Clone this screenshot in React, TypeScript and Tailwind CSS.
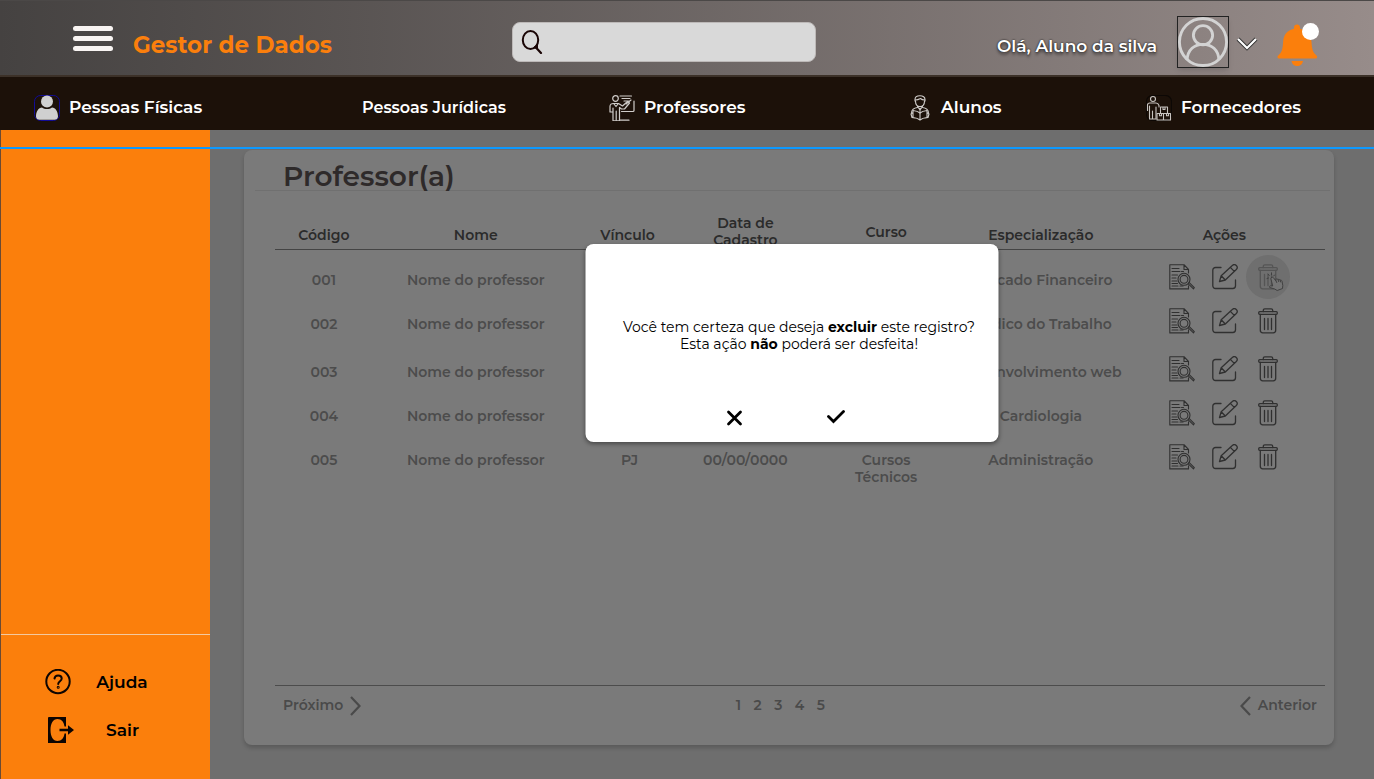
import type { ReactNode } from "react";

type Row = {
  code: string;
  name: string;
  bond?: string;
  date?: string;
  course?: string;
  specialty: string;
  height: string;
};

const rows: Row[] = [
  { code: "001", name: "Nome do professor", specialty: "Mercado Financeiro", height: "h-11" },
  { code: "002", name: "Nome do professor", specialty: "Médico do Trabalho", height: "h-12" },
  { code: "003", name: "Nome do professor", specialty: "Desenvolvimento web", height: "h-11" },
  { code: "004", name: "Nome do professor", specialty: "Cardiologia", height: "h-11" },
  { code: "005", name: "Nome do professor", bond: "PJ", date: "00/00/0000", course: "Cursos Técnicos", specialty: "Administração", height: "h-11" },
];

function PersonIcon() {
  return (
    <svg viewBox="0 0 26 26" className="size-[26px] shrink-0" aria-hidden="true">
      <rect x="0.5" y="0.5" width="25" height="25" rx="6" fill="none" stroke="#120c96" />
      <circle cx="13" cy="6.500" r="6" fill="#d0d0d0" />
      <path d="M2 21.500c0-5 2.500-9 6-9 1.500 1 3 1.600 5 1.600s3.500-.6 5-1.600c3.500 0 6 4 6 9 0 2-1.500 3.300-3.500 3.300h-15C3.500 24.800 2 23.500 2 21.500z" fill="#d0d0d0" />
    </svg>
  );
}

function TeacherIcon() {
  return (
    <svg viewBox="0 0 26 26" className="size-[26px] shrink-0" fill="none" stroke="#d0cdca" strokeWidth="1.200" strokeLinecap="round" strokeLinejoin="round" aria-hidden="true">
      <circle cx="6.500" cy="3.500" r="2.800" />
      <path d="M11 1h11.500M25 6v9.500a1 1 0 0 1-1 1H12.500M13 3.500h8M15 6h4.500" />
      <path d="M1 17v-5.500C1 9.500 2.500 8.500 4.500 8.500h5l4 2.500 5-4.500 2 1.500-5 6h-3l-2-1.500v13.300H4V13M1 17h2.500M7.200 16v9M10.500 25.200H20" />
      <path d="m17 9 5-4M5 9l2 2.500L9 9" />
    </svg>
  );
}

function StudentIcon() {
  return (
    <svg viewBox="0 0 22 26" className="h-[26px] w-[22px] shrink-0" fill="none" stroke="#d0cdca" strokeWidth="1.100" strokeLinecap="round" strokeLinejoin="round" aria-hidden="true">
      <path d="M5 6V4.500C5 2 7 .8 10 .8s5 1.200 5 3.700V6M5.500 5c3 0 4-1 5-1.500 1 1 2 1.500 4 1.500" />
      <path d="M5.500 6c0 3.500 1.800 5.500 4.500 5.500s4.500-2 4.500-5.500M7.500 11.500 10 15l2.500-3.500M10 13v5" />
      <path d="M7.500 12.500C4 13 1.800 14.500 1.500 17.500M12.500 12.500c3.500.5 5.700 2 6 5" />
      <path d="M3 15.500c3 .3 5.500 1.200 7 2.500 1.500-1.300 4-2.200 7-2.500v7c-3 .3-5.500 1.200-7 2.500-1.500-1.300-4-2.200-7-2.500zM10 18v7M3 17.500l-2 1.500 1 3.500 3 .5M17 17.500l2 1.500-1 3.500-3 .5" />
    </svg>
  );
}

function SupplierIcon() {
  return (
    <svg viewBox="0 0 26 26" className="size-[26px] shrink-0" fill="none" stroke="#c8c4c0" strokeWidth="1.100" strokeLinecap="round" strokeLinejoin="round" aria-hidden="true">
      <rect x="0.500" y="0.500" width="25" height="25" rx="6" stroke="#0d0805" />
      <circle cx="7" cy="4" r="2.500" />
      <path d="M3.500 23.500V11M1.500 15.500V10C1.500 8.500 2.500 8 4 8h6c1.500 0 2.500 1 3 2.500V12M6.500 16v8M3.500 24h6.500V12" />
      <path d="M14.500 12h7v6.500h-7zM17 12v2.500h2V12M11 18.500h6.500V25H11zM17.500 18.500H24.500V25h-7zM13.500 18.500v2.200h2v-2.200M20.500 18.500v2.200h2v-2.200" />
    </svg>
  );
}

function DetailsIcon() {
  return (
    <svg viewBox="0 0 26 26" className="size-[26px]" fill="none" stroke="currentColor" strokeWidth="1.100" strokeLinecap="round" strokeLinejoin="round" aria-hidden="true">
      <path d="M19.500 9V5.500L15 .7H.8v24.200h18.700v-3M15 .7v4.800h4.500" />
      <path d="M3 4.500h7M3 7.500h8M12.500 7.500h2M3 11h5.500M3 14h4M3 17h5M3 19.500h5.500M3 22h6M11 22h3" />
      <circle cx="15" cy="15.300" r="6" />
      <circle cx="15" cy="15.300" r="3.900" />
      <path d="m19.300 19.800 5.200 5M20.300 18.700l5 4.900-.8 1.200" />
    </svg>
  );
}

function EditIcon() {
  return (
    <svg viewBox="0 0 26 26" className="size-[26px]" fill="none" stroke="currentColor" strokeWidth="1.300" strokeLinecap="round" strokeLinejoin="round" aria-hidden="true">
      <path d="M9 3.500H3.500a2.700 2.700 0 0 0-2.700 2.700v15.600a2.700 2.700 0 0 0 2.700 2.700h17.300a2.700 2.700 0 0 0 2.700-2.700V16" />
      <path d="m7.500 17.500 1.700-5.800L20.300 1.500a2.800 2.800 0 0 1 4 4L13.300 16zM9.200 11.700l4.100 4.300M18.300 3.400l4 4" />
    </svg>
  );
}

function TrashIcon() {
  return (
    <svg viewBox="0 0 20 26" className="h-[26px] w-5" fill="none" stroke="currentColor" strokeWidth="1.300" strokeLinecap="round" strokeLinejoin="round" aria-hidden="true">
      <rect x="0.700" y="3.700" width="18.600" height="2.600" rx="1" />
      <path d="M5.300 3.500V2.300c0-1 .6-1.500 1.500-1.500h6.400c.9 0 1.500.5 1.500 1.500v1.200M2.300 6.500v15.800c0 1.500 1 2.500 2.500 2.500h10.400c1.500 0 2.500-1 2.500-2.500V6.500M6.500 10.500v11M10 10.500v11M13.500 10.500v11" />
    </svg>
  );
}

function HandCursor() {
  return (
    <svg viewBox="0 0 18 20" className="absolute left-5 top-[17px] h-5 w-[18px]" fill="#757575" stroke="#414141" strokeLinejoin="round" strokeLinecap="round" aria-hidden="true">
      <path d="M5.500 5.500c.8-.6 1.600-.3 2.100.4l2.100 2.800.3-1.600c1-.5 1.700-.2 2 .5.900-.5 1.700-.2 2.100.6 1-.3 1.700.2 1.900 1l.8 4.300-.3 3-5.300 2-2.500-1.500-5-1.500c-.6-1 .2-1.700 1-1.700l2 .2L5 7.200c-.3-.7 0-1.400.5-1.700z" />
      <path d="M1 6.500 2.500 6M2 2l1.200 1.500M5.500.8v1.800M8.500 3 7.700 4M10 8.700l.7 1.800M12 7.600l.7 2M14.100 8.200l.5 1.800" fill="none" />
    </svg>
  );
}

function NavItem({ icon, children }: { icon?: ReactNode; children: ReactNode }) {
  return (
    <li>
      <a href="#" className="flex items-center gap-[9px] whitespace-nowrap">
        {icon}
        {children}
      </a>
    </li>
  );
}

function Header() {
  return (
    <header className="grid h-[77px] grid-cols-[512fr_304fr_558fr] border-b-2 border-t border-b-[#3c3128] border-t-[#4b4847] bg-linear-to-r from-[#454241] to-[#978c8a]">
      <div className="flex items-start pl-[73px]">
        <button type="button" aria-label="Abrir menu" className="mt-[25px] flex w-10 flex-col gap-[5px]">
          <span className="h-[5px] w-full rounded-sm bg-[#f8f4f2]" />
          <span className="h-[5px] w-full rounded-sm bg-[#f8f4f2]" />
          <span className="h-[5px] w-full rounded-sm bg-[#f8f4f2]" />
        </button>
        <a href="#" className="ml-5 mt-7 whitespace-nowrap text-[23px] font-bold leading-8 text-[#fb7f0c]">
          Gestor de Dados
        </a>
      </div>
      <label className="mt-[21px] flex h-10 items-center rounded-lg border border-[#bdb9b8] bg-[#d9d9d9] pl-2">
        <svg viewBox="0 0 22 24" className="h-6 w-[22px] shrink-0" fill="none" stroke="#1a0505" strokeLinecap="round" aria-hidden="true">
          <ellipse cx="9.500" cy="10" rx="7.700" ry="9" strokeWidth="2" />
          <path d="m14.500 17 5.500 6" strokeWidth="2.200" />
          <path d="M16.500 14.500v4l-3.500-.7z" fill="#1a0505" strokeWidth="1" />
        </svg>
        <input type="search" aria-label="Pesquisar" className="h-full min-w-0 flex-1 bg-transparent px-2 outline-none" />
      </label>
      <div className="flex items-start justify-end pr-[55px]">
        <span className="mt-[33px] whitespace-nowrap text-[17px] font-semibold leading-6 text-white [text-shadow:0_0_2px_#000,0_3px_3px_#0006]">
          Olá, Aluno da silva
        </span>
        <button type="button" aria-label="Perfil" className="ml-5 mt-[15px] flex items-center gap-2">
          <svg viewBox="0 0 52 52" className="size-[52px] border border-[#222] shadow-md" fill="none" stroke="#d3d3d3" strokeWidth="3" aria-hidden="true">
            <circle cx="26" cy="26" r="24.500" />
            <circle cx="26" cy="19" r="10" />
            <path d="M9.500 44.500C10 34 17 28.500 26 28.500S42 34 42.500 44.500" />
          </svg>
          <svg viewBox="0 0 20 14" className="mt-1 h-[14px] w-5 overflow-visible" fill="none" aria-hidden="true">
            <path d="m1 2 9 9 9-9" stroke="#333" strokeWidth="4" />
            <path d="m1 2 9 9 9-9" stroke="#fff" strokeWidth="2.200" />
          </svg>
        </button>
        <button type="button" aria-label="Notificações" className="ml-5 mt-[22px]">
          <svg viewBox="0 0 42 44" className="h-11 w-[42px]" aria-hidden="true">
            <path d="M20 1.500c1.800 0 3 1.200 3 3v1.200c7 1.300 11 6.300 11.500 13.300.4 7.500 1.500 10.500 5 13.500 1.200 1 .7 3-1 3H2.200c-1.800 0-2.300-2-1-3 3.500-3 4.500-6 4.900-13.500C6.500 12 10 7 17 5.700V4.500c0-1.800 1.200-3 3-3zM14.500 38h11.500c-.4 3-3 5-5.800 5s-5.300-2-5.700-5z" fill="#fb7f0c" />
            <circle cx="33.500" cy="8.500" r="8.500" fill="#fff" />
          </svg>
        </button>
      </div>
    </header>
  );
}

function TeachersTable() {
  return (
    <table className="w-full table-fixed border-collapse text-center text-sm font-semibold leading-[17px] text-[#4c4c4c]">
      <colgroup>
        <col className="w-[9.320%]" />
        <col className="w-[19.600%]" />
        <col className="w-[9.320%]" />
        <col className="w-[13.120%]" />
        <col className="w-[13.690%]" />
        <col className="w-[15.780%]" />
        <col />
      </colgroup>
      <thead className="text-[#2b2b2b]">
        <tr className="h-[37px] border-b border-[#444]">
          <th className="pt-2.5 font-semibold">Código</th>
          <th className="pt-2.5 font-semibold">Nome</th>
          <th className="pt-2.5 font-semibold">Vínculo</th>
          <th className="px-8 pt-1 font-semibold">Data de Cadastro</th>
          <th className="pt-1 font-semibold">Curso</th>
          <th className="pt-2.5 font-semibold">Especialização</th>
          <th className="pt-2.5 font-semibold">Ações</th>
        </tr>
      </thead>
      <tbody className="before:block before:h-[5px]">
        {rows.map((row, i) => (
          <tr key={row.code} className={`${row.height} align-top`}>
            <td className="pt-[17px]">{row.code}</td>
            <td className="whitespace-nowrap pt-[17px]">{row.name}</td>
            <td className="pl-1 pt-[17px]">{row.bond}</td>
            <td className="pt-[17px]">{row.date}</td>
            <td className="px-8 pt-[17px]">{row.course}</td>
            <td className="whitespace-nowrap pt-[17px]">{row.specialty}</td>
            <td className="pl-0.5">
              <div className="flex justify-center text-[#303030]">
                <button type="button" aria-label={`Ver ${row.code}`} className="grid h-11 w-[43px] place-items-center">
                  <DetailsIcon />
                </button>
                <button type="button" aria-label={`Editar ${row.code}`} className="grid h-11 w-[43px] place-items-center">
                  <EditIcon />
                </button>
                {i === 0 ? (
                  <button type="button" aria-label={`Excluir ${row.code}`} className="relative grid size-11 place-items-center rounded-full bg-[#6f6f6f] text-[#555]">
                    <TrashIcon />
                    <HandCursor />
                  </button>
                ) : (
                  <button type="button" aria-label={`Excluir ${row.code}`} className="grid size-11 place-items-center">
                    <TrashIcon />
                  </button>
                )}
              </div>
            </td>
          </tr>
        ))}
      </tbody>
    </table>
  );
}

function Pagination() {
  return (
    <nav aria-label="Paginação" className="grid h-10 grid-cols-[461fr_89px_501fr] items-center border-t border-[#4c4c4c] px-2 pb-0.5 text-sm font-semibold text-[#4a4a4a]">
      <button type="button" className="flex items-center gap-[7px]">
        Próximo
        <svg viewBox="0 0 11 20" className="mt-[3px] h-5 w-[11px]" fill="none" stroke="currentColor" strokeWidth="2.200" aria-hidden="true">
          <path d="m1 1 8.500 9L1 19" />
        </svg>
      </button>
      <ol className="flex justify-between">
        {[1, 2, 3, 4, 5].map((n) => (
          <li key={n}>
            <a href="#">{n}</a>
          </li>
        ))}
      </ol>
      <button type="button" className="flex items-center justify-end gap-[7px]">
        <svg viewBox="0 0 11 20" className="mt-[3px] h-5 w-[11px]" fill="none" stroke="currentColor" strokeWidth="2.200" aria-hidden="true">
          <path d="M10 1 1.500 10 10 19" />
        </svg>
        Anterior
      </button>
    </nav>
  );
}

function ConfirmDialog() {
  return (
    <div role="alertdialog" aria-label="Confirmar exclusão" className="absolute left-1/2 top-[114px] flex h-[198px] w-[413px] -translate-x-1/2 flex-col justify-between rounded-lg bg-white pb-3 pt-[75px] shadow-[0_2px_4px_#0006]">
      <p className="whitespace-nowrap pl-[14px] text-center text-sm font-normal leading-[17px] text-black">
        Você tem certeza que deseja <strong className="font-bold">excluir</strong> este registro?
        <br />
        Esta ação <strong className="font-bold">não</strong> poderá ser desfeita!
      </p>
      <div className="flex justify-center gap-[78px] pr-[14px]">
        <button type="button" aria-label="Cancelar" className="grid size-6 place-items-center">
          <svg viewBox="0 0 16 16" className="size-4" fill="none" stroke="#000" strokeWidth="2.800" strokeLinecap="round" aria-hidden="true">
            <path d="m2 2 12 12M14 2 2 14" />
          </svg>
        </button>
        <button type="button" aria-label="Confirmar" className="grid size-6 place-items-center">
          <svg viewBox="0 0 20 16" className="h-4 w-5" fill="none" stroke="#000" strokeWidth="2.800" strokeLinecap="round" aria-hidden="true">
            <path d="m2 6.500 5 5L17 1.500" />
          </svg>
        </button>
      </div>
    </div>
  );
}

export default function App() {
  return (
    <div className="relative flex min-h-screen flex-col bg-[#6e6e6e] font-['Montserrat','Inter',sans-serif]">
      <Header />
      <nav aria-label="Principal" className="bg-[#1c1109]">
        <ul className="grid h-[53px] grid-cols-[328fr_247fr_301fr_236fr_228fr] items-center pl-[34px] pt-2 text-[17px] font-semibold text-white">
          <NavItem icon={<PersonIcon />}>Pessoas Físicas</NavItem>
          <li>
            <a href="#" className="whitespace-nowrap text-base">Pessoas Jurídicas</a>
          </li>
          <NavItem icon={<TeacherIcon />}>Professores</NavItem>
          <NavItem icon={<StudentIcon />}>Alunos</NavItem>
          <NavItem icon={<SupplierIcon />}>Fornecedores</NavItem>
        </ul>
      </nav>
      <div className="flex flex-1">
        <aside className="flex w-[210px] shrink-0 flex-col justify-end border-l border-[#6b4a33] bg-[#fb7f0c]">
          <ul className="flex h-[145px] flex-col gap-[22px] border-t border-[#f3c9a0] pt-[34px] text-[17px] font-semibold text-black">
            <li>
              <a href="#" className="flex h-[26px] items-center pl-11">
                <svg viewBox="0 0 26 26" className="size-[26px]" fill="none" stroke="#0d0502" strokeWidth="2" strokeLinecap="round" aria-hidden="true">
                  <circle cx="13" cy="12.500" r="11.700" />
                  <path d="M9.500 9.500c.3-2 1.700-3 3.600-3 2.100 0 3.600 1.200 3.600 3 0 2.700-3.500 2.700-3.500 5.500" />
                  <circle cx="13.200" cy="18.300" r="0.500" />
                </svg>
                <span className="w-[102px] pt-0.5 text-center">Ajuda</span>
              </a>
            </li>
            <li>
              <a href="#" className="flex h-[26px] items-center pl-[47px]">
                <svg viewBox="0 0 26 26" className="size-[26px]" aria-hidden="true">
                  <path d="M1 0h17v9.500h-1.500C16 5 13.500 2 9.500 2 5 2 2.500 6.500 2.500 13S5 24 9.500 24c4 0 6.500-3 7-7.500H18V26H0V1a1 1 0 0 1 1-1z" fill="#0d0502" />
                  <path d="M11.500 11.800H20V8.200l6 4.800-6 4.800v-3.600h-8.500z" fill="#0d0502" />
                </svg>
                <span className="w-[97px] pt-0.5 text-center">Sair</span>
              </a>
            </li>
          </ul>
        </aside>
        <main className="relative flex flex-1 flex-col pb-[34px] pl-[34px] pr-10 pt-5">
          <section className="flex flex-1 flex-col rounded-lg bg-[#7a7a7a] pb-5 shadow-[0_3px_4px_#0000002e]">
            <h1 className="ml-[11px] mr-1 h-[41px] border-b border-[#707070] pl-7 pt-1.5 text-[28px] font-semibold leading-10 text-[#2e2a2a]">
              Professor(a)
            </h1>
            <div className="flex flex-1 flex-col justify-between pl-[31px] pr-[9px] pt-5">
              <TeachersTable />
              <Pagination />
            </div>
          </section>
          <ConfirmDialog />
        </main>
      </div>
      <div className="absolute inset-x-0 top-[147px] h-[2px] bg-[#0d99ff]" />
    </div>
  );
}
